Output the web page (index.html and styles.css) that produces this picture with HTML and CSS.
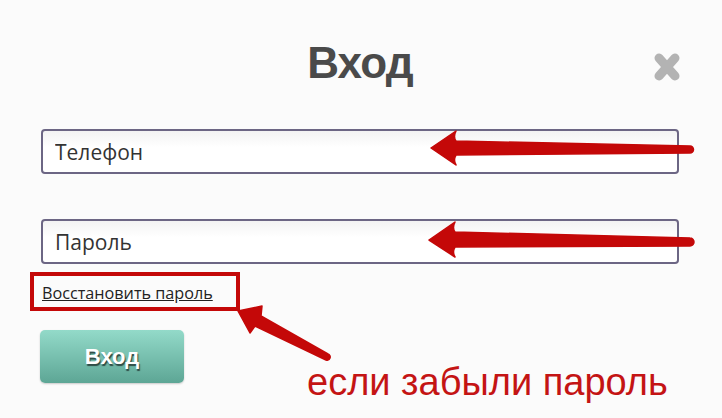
FILE: index.html
```html
<!DOCTYPE html>
<html lang="ru">
<head>
<meta charset="utf-8">
<title>Вход</title>
<link rel="stylesheet" href="styles.css">
</head>
<body>
<div class="modal">
  <div class="header">
    <span></span>
    <h1 class="title">Вход</h1>
    <svg class="close" width="26" height="28" viewBox="0 0 26 28" aria-label="Закрыть">
      <path d="M5 5 L21 23 M21 5 L5 23" stroke="#b3b3b3" stroke-width="9" stroke-linecap="round" fill="none"/>
    </svg>
  </div>
  <input class="field first" type="text" placeholder="Телефон">
  <input class="field second" type="password" placeholder="Пароль">
  <div class="restore"><a href="#" class="restore-link">Восстановить пароль</a></div>
  <div class="bottom">
    <button class="submit">Вход</button>
    <span class="hint">если забыли пароль</span>
  </div>
</div>
<svg class="arrows" width="722" height="418" viewBox="0 0 722 418">
  <g fill="#c40808" stroke="#c40808" stroke-width="1.5" stroke-linejoin="round">
    <path d="M431 148 L456 131 Q453 137 456 141 L690 146 A3.5 3.5 0 0 1 690 153 L456 155 Q453 160 456 165 Z"/>
    <path d="M429 240 L455 222 Q452 228 455 232 L690 238 A4 4 0 0 1 690 246 L455 247 Q452 252 455 257 Z"/>
    <path d="M238 311 L262 306 L261 316 L328 354 A3 3 0 0 1 326 360 L255 326 L250 333 Z"/>
  </g>
</svg>
</body>
</html>
```
FILE: styles.css
```css
html, body {
  margin: 0;
  padding: 0;
}
body {
  background: #fbfbfb;
  width: 722px;
  height: 418px;
  overflow: hidden;
  position: relative;
  font-family: "Open Sans", "DejaVu Sans", sans-serif;
}
.modal {
  padding: 37px 43px 0 41px;
}
.header {
  display: grid;
  grid-template-columns: 1fr auto 1fr;
  height: 52px;
}
.title {
  margin: 0;
  font-family: "Liberation Sans", Arial, sans-serif;
  font-weight: bold;
  font-size: 44px;
  line-height: 52px;
  color: #4a4a4a;
  letter-spacing: -0.8px;
}
.close {
  justify-self: end;
  margin-top: 16px;
  margin-right: -1px;
}
.field {
  display: block;
  box-sizing: border-box;
  width: 100%;
  height: 45px;
  margin: 0;
  padding: 0 12px;
  border: 2px solid #6c6684;
  border-radius: 4px;
  background: linear-gradient(#f3f3f3, #ffffff 40%);
  font-family: "Open Sans", "DejaVu Sans", sans-serif;
  font-size: 21px;
  color: #333;
  outline: none;
}
.field::placeholder {
  color: #333;
  opacity: 1;
}
.field.first {
  margin-top: 40px;
}
.field.second {
  margin-top: 45px;
}
.restore {
  margin: 8px 0 0 -11px;
  width: 194px;
  height: 31px;
  border: 4px solid #c40808;
  padding-left: 8px;
  display: flex;
  align-items: center;
}
.restore-link {
  font-family: "Open Sans", "DejaVu Sans", sans-serif;
  font-size: 16.2px;
  color: #222;
  text-decoration: underline;
  margin-top: 3px;
  white-space: nowrap;
}
.bottom {
  display: flex;
  margin-top: 19px;
  margin-left: -1px;
}
.submit {
  width: 144px;
  height: 53px;
  border: none;
  border-radius: 5px;
  background: linear-gradient(#93dac9, #5da695);
  box-shadow: 0 1px 2px rgba(0, 0, 0, 0.2);
  font-family: "Liberation Sans", Arial, sans-serif;
  font-weight: bold;
  font-size: 22px;
  color: #fff;
  text-shadow: 1px 2px 1px #2e4a44;
  padding: 0;
}
.hint {
  margin-left: 123px;
  margin-top: 34px;
  font-family: "Liberation Sans", Arial, sans-serif;
  font-size: 38px;
  line-height: 37px;
  color: #c41414;
  white-space: nowrap;
}
.arrows {
  position: absolute;
  left: 0;
  top: 0;
  pointer-events: none;
}
```
